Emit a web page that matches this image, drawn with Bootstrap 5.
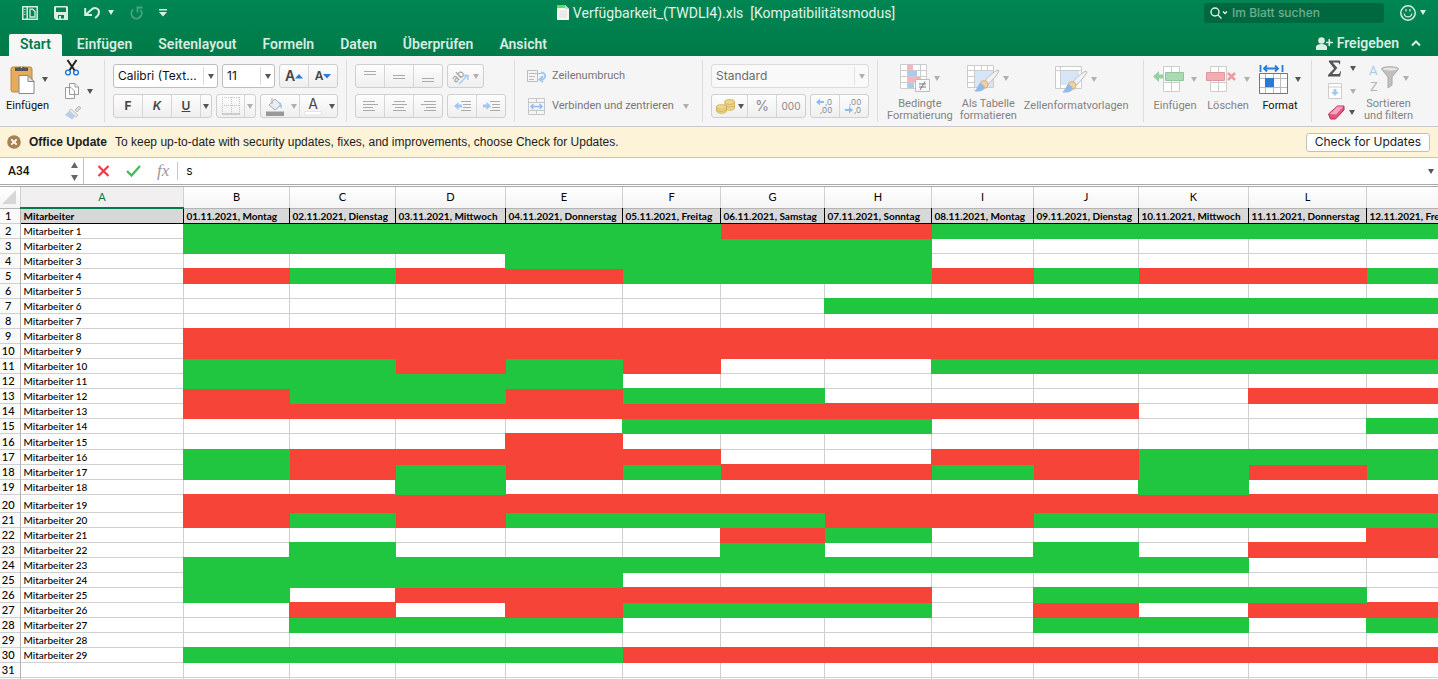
<!DOCTYPE html>
<html lang="de">
<head>
<meta charset="utf-8">
<meta name="viewport" content="width=device-width, initial-scale=1">
<title>Verfügbarkeit_(TWDLI4).xls</title>
<link href="https://cdn.jsdelivr.net/npm/bootstrap@5.3.0/dist/css/bootstrap.min.css" rel="stylesheet">
<style>
  body { font-family: Inter, sans-serif; font-size: 12px; line-height: 16px; color: #222; background: #fff; }
  button, select, input { font-family: inherit; color: inherit; }
  svg { display: block; flex: none; overflow: visible; }

  /* green title area */
  .app-head { background: linear-gradient(#008653, #007a48); color: #e3f2ea; }
  .title-row { height: 25px; }
  .title-row .side { flex: 1 1 0; }
  .quick { padding-left: 22px; gap: 16px; }
  .plain-btn { border: 0; background: none; padding: 0; display: flex; align-items: center; }
  .doc-title { font-size: 14px; font-family: Roboto, sans-serif; white-space: pre; }
  .sheet-search { width: 180px; height: 20px; background: #00683f; border-radius: 3px; padding: 0 6px; }
  .sheet-search input { border: 0; background: none; outline: 0; font-size: 12px; font-weight: 500; width: 130px; padding: 0; }
  .sheet-search input::placeholder { color: #6fae90; opacity: 1; }
  .tabs-row { height: 31px; padding: 9px 17px 0 9px; }
  .tabs-row .nav-link { color: #d6ece1; font-size: 14px; font-weight: 600; font-family: Roboto, sans-serif; line-height: 20px; padding: 0 13px; height: 22px; border-radius: 2px 2px 0 0; }
  .tabs-row .nav-link.active { background: #f6f6f6; color: #007a48; padding: 0 11px; margin-right: 2px; }
  .tabs-row .nav-link.share { height: 18px; }

  /* ribbon */
  .ribbon { background: #f5f5f5; border-bottom: 1px solid #c9c9cd; height: 71px; padding: 4px 0 4px 6px; overflow: hidden; color: #222; }
  .rgroup { border-right: 1px solid #dcdcdc; padding: 0 8px; flex: none; height: 62px; }
  .line2 { gap: 6px; padding-top: 4px; }
  .g-clip { width: 99px; }
  .g-cells { min-width: 188px; padding-left: 12px; }
  .g-format { min-width: 266px; padding: 0 9px; gap: 7px; }
  .g-sheet { min-width: 168px; padding: 0 9px; gap: 9px; }
  .small-tools { gap: 7px; }
  .g-edit .small-tools { gap: 6px; }
  .tri { display: inline-block; border: 3px solid transparent; border-top: 5px solid #555; border-bottom: 0; flex: none; }
  .tri.pale { border-top-color: #d9eee4; }
  .off { color: #8a8a8a; }
  .off .tri, .tri.off { border-top-color: #b0b0b0; }
  .seg { border: 1px solid #cfcfcf; border-radius: 3px; background: linear-gradient(#fdfdfd, #efefef); display: flex; height: 24px; overflow: hidden; }
  .seg button { border: 0; background: none; padding: 0; width: 29px; display: flex; align-items: center; justify-content: center; font-size: 14px; color: #444; }
  .seg button:first-child { width: 28px; }
  .seg button.narrow { width: 27px; }
  .seg button + button { border-left: 1px solid #d6d6d6; }
  .seg button.slim { width: 11px; }
  .seg button.thin { width: 35px; gap: 3px; }
  .seg button.small-a { font-size: 12px; }
  .seg button.off { color: #8a8a8a; }
  .seg button.zeros { font-size: 10px; }
  .pick { appearance: none; height: 24px; border: 1px solid #bdbdbd; border-radius: 3px; padding: 0 4px; font-size: 12px; line-height: 20px; color: #111;
    background: linear-gradient(#dcdcdc, #dcdcdc) right 13px center / 1px 18px no-repeat, url("data:image/svg+xml,%3Csvg xmlns='http://www.w3.org/2000/svg' width='6' height='5'%3E%3Cpath d='M0 0h6L3 5z' fill='%23555'/%3E%3C/svg%3E") right 3px center no-repeat, #fff; }
  .pick-font { width: 105px; }
  .pick-size { width: 53px; }
  .pick.dim { color: #6c6c6c; border-color: #dcdcdc; background-color: #f9f9f9;
    background-image: linear-gradient(#e4e4e4, #e4e4e4), url("data:image/svg+xml,%3Csvg xmlns='http://www.w3.org/2000/svg' width='6' height='5'%3E%3Cpath d='M0 0h6L3 5z' fill='%23b0b0b0'/%3E%3C/svg%3E"); }
  .tool { border: 0; background: none; padding: 0; font-size: 11px; line-height: 12px; color: #111; white-space: nowrap; display: flex; flex-direction: column; align-items: center; text-align: center; font-family: Roboto, sans-serif; }
  .tool.off { color: #838383; }
  .tool .pic { height: 38px; display: flex; align-items: center; gap: 4px; margin-bottom: 2px; }
  .g-sheet .pic, .g-clip .pic { gap: 7px; }
  .wide { border: 0; background: none; padding: 0; height: 24px; display: flex; align-items: center; gap: 5px; font: 11px/16px Roboto, sans-serif; color: #777; white-space: nowrap; }

  /* update notice */
  .notice { background: #fdf3d8; border-bottom: 1px solid #cbc4ac; height: 31px; padding: 0 8px 0 7px; font: 12px/16px "Liberation Sans", sans-serif; color: #1c1c1c; gap: 8px; }
  .notice button { font: 12px/16px Inter, sans-serif; background: #fff; border: 1px solid #c2c0b8; border-radius: 3px; height: 19px; padding: 0 8px; }

  /* formula bar */
  .fbar { height: 27px; border-bottom: 1px solid #a8a8a8; background: #fff; }
  .fbar input { border: 0; outline: 0; padding: 0; background: none; font-size: 12px; color: #111; }
  .namebox { width: 84px; border-right: 1px solid #c4c4c4; padding: 0 5px 0 8px; }
  .namebox input { width: 50px; font-family: Roboto, sans-serif; font-weight: 500; }
  .entry { padding-left: 13px; gap: 16px; }
  .fx { font: italic 17px "Liberation Serif", serif; color: #9a9a9a; }

  /* sheet */
  .sheet { border-top: 1px solid #a8a8a8; margin-top: 1px; overflow: hidden; font-family: Lato, sans-serif; }
  .cells { border-collapse: collapse; table-layout: fixed; width: 1540px; font-size: 11px; line-height: 12px; color: #000; }
  .cells col.w20 { width: 20px; }
  .cells col.w98 { width: 98px; }
  .cells col.w102 { width: 102px; }
  .cells col.w104 { width: 104px; }
  .cells col.w105 { width: 105px; }
  .cells col.w106 { width: 106px; }
  .cells col.w107 { width: 107px; }
  .cells col.w110 { width: 110px; }
  .cells col.w117 { width: 117px; }
  .cells col.w118 { width: 118px; }
  .cells col.w163 { width: 163px; }
  .cells tr { height: 15px; }
  .cells tr.h16 { height: 16px; }
  .cells tr.h18 { height: 18px; }
  .cells tr.letters { height: 21px; }
  .cells td, .cells th { padding: 0 2px 1px 3px; border: 1px solid #d0d0d0; white-space: nowrap; overflow: hidden; vertical-align: bottom; font-weight: 500; }
  .cells td { font-size: 10px; }
  .cells .letters th { text-align: center; vertical-align: middle; font-weight: 400; background: linear-gradient(#fff, #f4f4f4); border-top: 0; border-bottom-color: #b4b4b4; }
  .cells .letters th:first-child { border-left: 0; }
  .cells .letters th.cur { color: #007a48; background: #f0f0f0; border-bottom: 2px solid #007a48; }
  .cells tbody th { text-align: center; padding: 0 3px 1px 0; background: #fafafa; border-left: 0; border-right: 1px double #b4b4b4; }
  .cells .days td { background: #d8d8d8; font-weight: 700; border-left: 1px double #000; border-bottom: 1px double #000; }
  .cells .days td:nth-child(2) { border-left-color: #b4b4b4; }
  .cells td.yes { background: #20c540; border: 1px double #20c540; }
  .cells td.no { background: #f74438; border: 1px double #f74438; }
  .cells .days + tr td { border-top: 1px double #000; }
</style>
</head>
<body class="vh-100 overflow-hidden d-flex flex-column">

<header class="app-head flex-shrink-0">
  <div class="title-row d-flex align-items-center">
    <div class="side quick d-flex align-items-center">
      <button class="plain-btn" aria-label="Seitenleiste"><svg width="16" height="14" viewBox="0 0 16 14" fill="none" stroke="#d9eee4" stroke-width="1.5"><path d="M.8.8h14.4v12.4H.8zM5.200 1v12"/><path d="M8 3.200h2.700L13 5.500V11H8z" stroke-width="1.300"/><path d="M2.200 3.500h1.300M2.200 6h1.300M2.200 8.500h1.300" stroke-width="1"/></svg></button>
      <button class="plain-btn" aria-label="Sichern"><svg width="14" height="14" viewBox="0 0 14 14"><path d="M0 1l1-1h12l1 1v13H2l-2-2zM2 1.500V6h10V1.500zM4 9v3.500h6V9z" fill="#d9eee4" fill-rule="evenodd"/><path d="M5 10h2v3H5z" fill="#d9eee4"/></svg></button>
      <button class="plain-btn" aria-label="Rückgängig"><svg width="16" height="13" viewBox="0 0 16 13" fill="none" stroke="#d9eee4" stroke-width="2"><path d="M1.200 2v7H8M2 8.500 7 4c4-4 8-1 8 2 0 2-1 4-4 6"/></svg><span class="tri pale ms-2"></span></button>
      <button class="plain-btn" aria-label="Wiederholen"><svg width="13" height="14" viewBox="0 0 13 14" fill="none" stroke="#4ba57f" stroke-width="1.800"><path d="M3 3.500A5.200 5.200 0 1 0 10.500 4M7.500 6.500V1.500h5"/></svg></button>
      <button class="plain-btn" aria-label="Anpassen"><svg width="8" height="8" viewBox="0 0 8 8" fill="#d9eee4"><path d="M0 0h8v1.500H0zM0 3h8L4 7.500z"/></svg></button>
    </div>
    <div class="d-flex align-items-center gap-1">
      <svg width="12" height="15" viewBox="0 0 12 15"><path d="M0 0h8l4 4v11H0z" fill="#f7f7f7"/><path d="M0 0h8v3H0z" fill="#5fdd62"/><path d="M8 0v4h4z" fill="#cfd6cf"/><path d="M2 6h8M2 8h8M2 10h8M2 12h8" stroke="#ddd"/></svg>
      <span class="doc-title">Verfügbarkeit_(TWDLI4).xls  [Kompatibilitätsmodus]</span>
    </div>
    <div class="side d-flex align-items-center justify-content-end pe-2">
      <label class="sheet-search d-flex align-items-center gap-1">
        <svg width="18" height="12" viewBox="0 0 18 12" fill="none" stroke="#e3f2ea" stroke-width="1.400"><circle cx="5" cy="5" r="4"/><path d="m8 8 3.500 3.500M13 4.500l2 2 2-2"/></svg>
        <input type="text" placeholder="Im Blatt suchen" aria-label="Im Blatt suchen">
      </label>
      <button class="plain-btn ms-3 me-1" aria-label="Feedback"><svg width="16" height="16" viewBox="0 0 16 16" fill="none" stroke="#d9eee4" stroke-width="1.500"><circle cx="8" cy="8" r="7.200"/><path d="M4.200 8.500c.5 4.500 7.100 4.500 7.600 0M6 4v2.500M10 4v2.500" stroke-width="1.200"/></svg><span class="tri pale ms-1"></span></button>
    </div>
  </div>
  <div class="tabs-row d-flex">
    <nav class="nav flex-nowrap">
      <a class="nav-link active" href="#">Start</a>
      <a class="nav-link" href="#">Einfügen</a>
      <a class="nav-link" href="#">Seitenlayout</a>
      <a class="nav-link" href="#">Formeln</a>
      <a class="nav-link" href="#">Daten</a>
      <a class="nav-link" href="#">Überprüfen</a>
      <a class="nav-link" href="#">Ansicht</a>
    </nav>
    <a class="nav-link share ms-auto d-flex align-items-center gap-1 px-0" href="#"><svg width="17" height="13" viewBox="0 0 17 13" fill="#d9eee4"><circle cx="5.500" cy="3.500" r="3.300"/><path d="M0 13V10c0-2 3-3 5.500-3S11 8 11 10v3zM12.500 2h1.600v2.700H17v1.600h-2.900V9h-1.600V6.300H10V4.700h2.500z"/></svg>Freigeben</a>
    <button class="plain-btn ms-2 ps-1 mb-1" aria-label="Menüband ausblenden"><svg width="10" height="6" viewBox="0 0 10 6" fill="none" stroke="#d9eee4" stroke-width="2"><path d="m1 5.500 4-4 4 4"/></svg></button>
  </div>
</header>

<main class="flex-grow-1 d-flex flex-column overflow-hidden">
<div class="ribbon d-flex flex-shrink-0">
  <div class="rgroup g-clip d-flex px-0">
    <button class="tool"><span class="pic ps-1"><svg width="25" height="31" viewBox="0 0 25 31"><rect x="1" y="3" width="21" height="25" rx="2" fill="#e6ab5c" stroke="#bf873c"/><path d="M5 7V3.500h4a3 3 0 0 1 5 0h4V7z" fill="#555"/><circle cx="11.500" cy="3" r="1" fill="#ddd"/><path d="M9 11.500h9l6 6v12H9z" fill="#fff" stroke="#888"/><path d="M18 11.500v6h6z" fill="#e5e5e5" stroke="#888"/></svg><span class="tri"></span></span>Einfügen</button>
    <div class="small-tools d-flex flex-column ms-3">
      <button class="plain-btn" aria-label="Ausschneiden"><svg width="14" height="16" viewBox="0 0 14 16" fill="none"><path d="M2.500 0 10 11M11.500 0 4 11" stroke="#222" stroke-width="2"/><circle cx="3" cy="12.500" r="2.400" stroke="#1f78d8" stroke-width="1.400"/><circle cx="11" cy="12.500" r="2.400" stroke="#1f78d8" stroke-width="1.400"/></svg></button>
      <button class="plain-btn gap-2" aria-label="Kopieren"><svg width="14" height="16" viewBox="0 0 14 16" fill="#fff" stroke="#999"><path d="M.5 4.500H6L9.500 8v7.500h-9zM4.500.5H10L13.500 4v7.500h-9z"/><path d="M10 .5V4h3.500"/></svg><span class="tri"></span></button>
      <button class="plain-btn" aria-label="Format übertragen"><svg width="17" height="14" viewBox="0 0 17 14"><path d="m10 4 4-4 2 2-4 4z" fill="#d9d9d9" stroke="#b5b5b5" stroke-width=".8"/><path d="m6 3 7 6-2 2-7-6z" fill="#e9e9e9" stroke="#b8b8b8" stroke-width=".8"/><path d="m4 5 6 5.500-3 3L0 9z" fill="#b6d0ec"/></svg></button>
    </div>
  </div>

  <div class="rgroup d-flex flex-column line2">
    <div class="d-flex gap-1">
      <select class="pick pick-font" aria-label="Schriftart"><option>Calibri (Text...</option></select>
      <select class="pick pick-size" aria-label="Schriftgrad"><option>11</option></select>
      <div class="seg"><button class="fw-semibold" aria-label="Größer">A<svg width="8" height="5" viewBox="0 0 8 5"><path d="M0 4.500 4 0l4 4.500z" fill="#2a7bd6"/></svg></button><button class="small-a fw-semibold" aria-label="Kleiner">A<svg width="8" height="5" viewBox="0 0 8 5"><path d="M0 0 4 4.500 8 0z" fill="#2a7bd6"/></svg></button></div>
    </div>
    <div class="d-flex gap-1">
      <div class="seg"><button class="small-a fw-bold">F</button><button class="small-a fw-semibold fst-italic">K</button><button class="small-a fw-semibold text-decoration-underline">U</button><button class="slim" aria-label="Unterstreichung"><span class="tri"></span></button></div>
      <div class="seg off"><button class="narrow" aria-label="Rahmen"><svg width="18" height="18" viewBox="0 0 18 18" fill="none" stroke="#c4c4c4"><path d="M.5 0v17M9.500 0v17M17.500 0v17M0 .5h18M0 8.500h18" stroke-dasharray="1 1"/><path d="M0 17h18" stroke="#aaa"/></svg></button><button class="slim" aria-label="Rahmenart"><span class="tri"></span></button></div>
      <div class="seg"><button class="narrow" aria-label="Füllfarbe"><svg width="18" height="19" viewBox="0 0 18 19"><path d="m3 8 6-6 6 6-6 5z" fill="#e8eef5" stroke="#aaa"/><path d="M6 1v6" stroke="#aaa"/><path d="M13 5c3 1 3 3 2.500 7-1-1-2-3-2.500-7z" fill="#9fc2ea"/><path d="M0 14.500h18V19H0z" fill="#999"/></svg></button><button class="slim off border-0" aria-label="Füllfarbe wählen"><span class="tri"></span></button><button class="narrow" aria-label="Schriftfarbe"><svg width="18" height="19" viewBox="0 0 18 19"><text x="9" y="12" text-anchor="middle" font-size="14" fill="#444">A</text><path d="M.5 14.500h17V18H.5z" fill="#fff" stroke="#e4e4e4"/></svg></button><button class="slim border-0" aria-label="Schriftfarbe wählen"><span class="tri"></span></button></div>
    </div>
  </div>

  <div class="rgroup d-flex flex-column line2">
    <div class="d-flex gap-1">
      <div class="seg"><button aria-label="Oben"><svg width="12" height="14" stroke="#aaa"><path d="M0 2.500h12M0 5.500h12"/></svg></button><button aria-label="Mitte"><svg width="12" height="14" stroke="#aaa"><path d="M0 6.500h12M0 9.500h12"/></svg></button><button aria-label="Unten"><svg width="12" height="14" stroke="#aaa"><path d="M0 9.500h12M0 12.500h12"/></svg></button></div>
      <div class="seg off"><button class="thin" aria-label="Ausrichtung"><svg width="18" height="18" viewBox="0 0 18 18"><text x="0" y="13" font-size="11" fill="#999" transform="rotate(-42 6 10)">ab</text><path d="m7 17 8-8M11.500 8.500H16V13" fill="none" stroke="#a8c8ee" stroke-width="1.400"/></svg><span class="tri"></span></button></div>
    </div>
    <div class="d-flex gap-1">
      <div class="seg"><button aria-label="Linksbündig"><svg width="15" height="12" stroke="#aaa"><path d="M0 1.500h12M0 4.500h15M0 7.500h10M0 10.500h12"/></svg></button><button aria-label="Zentriert"><svg width="15" height="12" stroke="#aaa"><path d="M2 1.500h11M0 4.500h15M3 7.500h9M1 10.500h13"/></svg></button><button aria-label="Rechtsbündig"><svg width="15" height="12" stroke="#aaa"><path d="M3 1.500h12M0 4.500h15M5 7.500h10M3 10.500h12"/></svg></button></div>
      <div class="seg"><button aria-label="Einzug verkleinern"><svg width="17" height="12"><path d="M7 1.500h10M9 4.500h8M9 7.500h8M7 10.500h10" stroke="#aaa"/><path d="m0 6 4.500-4v2.500H8v3H4.500V10z" fill="#a3c8f0"/></svg></button><button aria-label="Einzug vergrößern"><svg width="17" height="12"><path d="M7 1.500h10M9 4.500h8M9 7.500h8M7 10.500h10" stroke="#aaa"/><path d="M8 6 3.500 2v2.500H0v3h3.500V10z" fill="#a3c8f0"/></svg></button></div>
    </div>
  </div>

  <div class="rgroup g-cells d-flex flex-column line2">
    <button class="wide"><svg width="20" height="14" viewBox="0 0 20 14" fill="none" stroke="#bbb"><path d="M.5 1.500h10v11H.5zM2 4.500h12M2 7.500h6M2 10.500h5"/><path d="M14 3.500c6 0 5 7 0 7M16 7l-3.500 3.500L16 13" stroke="#a3c8f0" stroke-width="2"/></svg>Zeilenumbruch</button>
    <button class="wide"><svg width="20" height="17" viewBox="0 0 20 17" fill="none" stroke="#c6c6c6"><path d="M1.500.5h16v16h-16zM1.500 4.500h16M1.500 12.500h16M9.500.5v4M9.500 12.500v4"/><path d="M4 8.500h11M6.500 6 4 8.500 6.500 11M12.500 6 15 8.500 12.500 11" stroke="#8fbcee" stroke-width="1.400"/></svg>Verbinden und zentrieren<span class="tri off ms-1"></span></button>
  </div>

  <div class="rgroup d-flex flex-column line2">
    <select class="pick dim" aria-label="Zahlenformat"><option>Standard</option></select>
    <div class="d-flex gap-1">
      <div class="seg"><button class="thin" aria-label="Währung"><svg width="19" height="15" viewBox="0 0 19 15" fill="#f1d78c" stroke="#c9a850" stroke-width=".8"><path d="M9 3v6c1 3 9 3 9.500 0V3z"/><ellipse cx="13.700" cy="3" rx="4.800" ry="2.400"/><path d="M9 6c1 2.500 9 2.500 9.500 0M.5 8v4c1 3 9 3 10 0V8z"/><ellipse cx="5.500" cy="8" rx="5" ry="2.300"/><path d="M.5 10.500c1 2.500 9 2.500 10 0"/></svg><span class="tri"></span></button><button class="off">%</button><button class="off zeros">000</button></div>
      <div class="seg"><button aria-label="Dezimalstelle hinzufügen"><svg width="18" height="18" viewBox="0 0 18 18" font-size="8" fill="#888"><text x="9" y="8">,0</text><text x="4" y="16">,00</text><path d="m0 5 4-3.500V4h4v2H4v2.500z" fill="#8fbcee"/></svg></button><button aria-label="Dezimalstelle löschen"><svg width="18" height="18" viewBox="0 0 18 18" font-size="8" fill="#888"><text x="4" y="8">,00</text><text x="9" y="16">,0</text><path d="m8 13-4-3.500V12H0v2h4v2.500z" fill="#8fbcee"/></svg></button></div>
    </div>
  </div>

  <div class="rgroup g-format d-flex">
    <button class="tool off"><span class="pic"><svg width="30" height="28" viewBox="0 0 30 28"><path d="M.5.5h26v24H.5zM.5 6.500h26M.5 12.500h26M.5 18.500h26M7.500.5v24M20.500.5v24" fill="#fff" stroke="#ccc"/><path d="M8 1h5v5H8zM8 13h12v5H8z" fill="#f6b5b8"/><path d="M8 7h9v5H8zM8 19h6v5H8z" fill="#a9cbf2"/><path d="M15.500 15.500h14v12h-14z" fill="#fafafa" stroke="#bbb"/><path d="M19 20h7M19 23h7M25 17.500 20 26" stroke="#777"/></svg><span class="tri"></span></span>Bedingte<br>Formatierung</button>
    <button class="tool off"><span class="pic"><svg width="32" height="28" viewBox="0 0 32 28"><path d="M.5 1.500h26v22H.5zM.5 6.500h26M.5 12.500h26M.5 18.500h26M7.500 1v22M14.500 1v22M20.500 1v22" fill="#fff" stroke="#ccc"/><path d="M8 7h18v16H8z" fill="#d6e6f7"/><path d="M31 6c-5 2-11 8-14 12l3 3c5-4 10-10 12-14z" fill="#f2f2f2" stroke="#bbb"/><circle cx="17" cy="20.500" r="4" fill="#f2d1a0" stroke="#d4b27c"/><path d="M14 19c-4 2-3 6-7 8 5 1.500 10 0 11-4z" fill="#93b9e6"/></svg><span class="tri"></span></span>Als Tabelle<br>formatieren</button>
    <button class="tool off"><span class="pic"><svg width="32" height="28" viewBox="0 0 32 28"><path d="M.5 1.500h26v22H.5zM.5 5.500h26M5.500 1v22" fill="#fff" stroke="#ccc"/><path d="M6 6h18v14H6z" fill="#d6e6f7"/><path d="M31 6c-5 2-11 8-14 12l3 3c5-4 10-10 12-14z" fill="#f2f2f2" stroke="#bbb"/><circle cx="17" cy="20.500" r="4" fill="#f2d1a0" stroke="#d4b27c"/><path d="M14 19c-4 2-3 6-7 8 5 1.500 10 0 11-4z" fill="#93b9e6"/></svg><span class="tri"></span></span>Zellenformatvorlagen</button>
  </div>

  <div class="rgroup g-sheet d-flex">
    <button class="tool off"><span class="pic"><svg width="31" height="26" viewBox="0 0 31 26"><path d="M10.500.5h16v25h-16zM10.500 16.500h16M18.500.5v25" fill="#fff" stroke="#ccc"/><path d="M12.500 6.500h18v8h-18z" fill="#a9dab1" stroke="#8fc799"/><path d="m0 10.500 6-5.500v3.500h4v4H6V16z" fill="#96cfa0"/></svg><span class="tri"></span></span>Einfügen</button>
    <button class="tool off"><span class="pic"><svg width="31" height="26" viewBox="0 0 31 26"><path d="M4.500.5h16v25h-16zM4.500 16.500h16M12.500.5v25" fill="#fff" stroke="#ccc"/><path d="M.5 6.500h18v8H.5z" fill="#f2adb3" stroke="#e3959c"/><path d="m22 7 7 7M29 7l-7 7" stroke="#ee9aa2" stroke-width="2.500"/></svg><span class="tri"></span></span>Löschen</button>
    <button class="tool"><span class="pic"><svg width="29" height="29" viewBox="0 0 29 29"><path d="M.5 8.500h28v20H.5zM.5 13.500h28M.5 22.500h28M6.500 8v20M14.500 8v20M21.500 8v20" fill="#fff" stroke="#bbb"/><path d="M.5 8.500h28v20H.5z" fill="none" stroke="#777"/><path d="M6 13h9v9H6z" fill="#2a7bd6"/><path d="M1.500 0v7M23.500 0v7M5 3.500h14M8 .5l-3 3 3 3M16 .5l3 3-3 3" fill="none" stroke="#2a7bd6" stroke-width="1.800"/></svg><span class="tri"></span></span>Format</button>
  </div>

  <div class="g-edit d-flex ps-3 gap-2 flex-shrink-0">
    <div class="small-tools d-flex flex-column">
      <button class="plain-btn gap-2" aria-label="AutoSumme"><svg width="14" height="17" viewBox="0 0 15 17"><path d="M1 0h12v4h-1c0-2-1-2-3-2H5l5 6-5.500 6.500H10c2 0 3-1 3-3h1L13 17H0v-1.500L6.500 8.500 1 1.500z" fill="#555"/></svg><span class="tri"></span></button>
      <button class="plain-btn gap-2" aria-label="Ausfüllen"><svg width="14" height="16" viewBox="0 0 14 16"><path d="M.5.5h13v15H.5zM.5 4h13" fill="#fff" stroke="#ccc"/><path d="M5.500 6h3v3H11l-4 4-4-4h2.500z" fill="#a3c8f0"/></svg><span class="tri off"></span></button>
      <button class="plain-btn gap-1" aria-label="Löschen"><svg width="17" height="15" viewBox="0 0 17 15"><path d="m.5 9 9-8h6.500v4l-8.500 9h-5z" fill="#e0557d" stroke="#b92e58"/><path d="m1.500 9 8-7.500h6L8 9.500z" fill="#f6a3bb"/></svg><span class="tri"></span></button>
    </div>
    <button class="tool off"><span class="pic"><svg width="31" height="30" viewBox="0 0 31 30"><text x="1" y="12" font-size="13" fill="#a9c9f0">A</text><text x="2" y="28" font-size="13" fill="#b5b5b5">Z</text><path d="M13.500 6c0-3 17-3 17 0l-6.500 8v8l-4 3V14z" fill="#c0c0c0" stroke="#aaa"/><ellipse cx="22" cy="6" rx="7.500" ry="1.500" fill="#e6e6e6"/></svg><span class="tri"></span></span>Sortieren<br>und filtern</button>
  </div>
</div>

<div class="notice d-flex align-items-center flex-shrink-0">
  <svg width="14" height="14" viewBox="0 0 14 14"><circle cx="7" cy="7" r="6.800" fill="#a5824f"/><path d="m4.300 4.300 5.400 5.400M9.700 4.300 4.300 9.700" stroke="#fff" stroke-width="1.800"/></svg>
  <b>Office Update</b><span>To keep up-to-date with security updates, fixes, and improvements, choose Check for Updates.</span>
  <button class="ms-auto">Check for Updates</button>
</div>

<div class="fbar d-flex align-items-center flex-shrink-0">
  <div class="namebox d-flex align-items-center justify-content-between h-100">
    <input type="text" value="A34" aria-label="Namenfeld">
    <svg width="7" height="19" viewBox="0 0 7 19" fill="#666"><path d="M0 6 3.500 0 7 6zM0 13h7l-3.500 6z"/></svg>
  </div>
  <div class="entry d-flex align-items-center">
    <button class="plain-btn" aria-label="Abbrechen"><svg width="13" height="12" viewBox="0 0 13 12" stroke="#ef3b47" stroke-width="2.200"><path d="m1.500 1 10 10M11.500 1l-10 10"/></svg></button>
    <button class="plain-btn" aria-label="Eingeben"><svg width="15" height="12" viewBox="0 0 15 12" fill="none" stroke="#45bd5c" stroke-width="2.400"><path d="m1 6 4.500 4.500L14 1"/></svg></button>
    <span class="fx">fx</span>
  </div>
  <span class="vr ms-2 me-2 my-1"></span>
  <input class="flex-grow-1" type="text" value="s" aria-label="Formel">
  <span class="tri me-1"></span>
</div>

<div class="sheet flex-grow-1">
  <table class="cells">
    <colgroup><col class="w20"><col class="w163"><col class="w106"><col class="w106"><col class="w110"><col class="w117"><col class="w98"><col class="w104"><col class="w107"><col class="w102"><col class="w105"><col class="w110"><col class="w118"><col></colgroup>
    <thead><tr class="letters"><th class="p-0"><svg class="ms-auto me-1" width="14" height="14"><path d="M14 0v14H0z" fill="#d6d6d6"/></svg></th><th class="cur">A</th><th>B</th><th>C</th><th>D</th><th>E</th><th>F</th><th>G</th><th>H</th><th>I</th><th>J</th><th>K</th><th>L</th><th>M</th></tr></thead>
    <tbody id="rows">
      <tr class="days"><th>1</th><td>Mitarbeiter</td><td>01.11.2021, Montag</td><td>02.11.2021, Dienstag</td><td>03.11.2021, Mittwoch</td><td>04.11.2021, Donnerstag</td><td>05.11.2021, Freitag</td><td>06.11.2021, Samstag</td><td>07.11.2021, Sonntag</td><td>08.11.2021, Montag</td><td>09.11.2021, Dienstag</td><td>10.11.2021, Mittwoch</td><td>11.11.2021, Donnerstag</td><td>12.11.2021, Freitag</td></tr>
    </tbody>
  </table>
</div>
</main>

<script src="https://cdn.jsdelivr.net/npm/bootstrap@5.3.0/dist/js/bootstrap.bundle.min.js"></script>
<script>
  // One string per employee, one letter per day: G = available, R = not available, . = no entry
  const days = [
    'GGGGGRRGGGGG', 'GGGGGGG.....', '...GGGG.....', 'RGRRGGGRGRRG', '............',
    '......GGGGGG', '............', 'RRRRRRRRRRRR', 'RRRRRRRRRRRR', 'GGRGR..GGGGG',
    'GGGG........', 'RGGRGG....RR', 'RRRRRRRRR...', '....GGG....G', '...R........',
    'GRRRR..RRGGG', 'GRGRGRRGRGRG', '..G......G..', 'RRRRRRRRRRRR', 'RGRGGGRRGGGG',
    '.....RG....R', '.G...G..G.RR', 'GGGGGGGGGG..', 'GGGG........', 'G.RRRRR.GGG.',
    '.R.RGGG.R.RR', '.GGG....GG.G', '............', 'GGGGRRRRRRRR', '............', '............'
  ];
  const heights = { 16: 'h16', 20: 'h18' };
  const kinds = { G: 'yes', R: 'no', '.': '' };
  const body = document.getElementById('rows');
  days.forEach((line, i) => {
    const tr = body.insertRow();
    tr.className = heights[i + 2] || '';
    const th = document.createElement('th');
    th.textContent = i < 30 ? i + 2 : '';
    tr.append(th);
    tr.insertCell().textContent = i < 29 ? 'Mitarbeiter ' + (i + 1) : '';
    for (const c of line) tr.insertCell().className = kinds[c];
  });
</script>
</body>
</html>
